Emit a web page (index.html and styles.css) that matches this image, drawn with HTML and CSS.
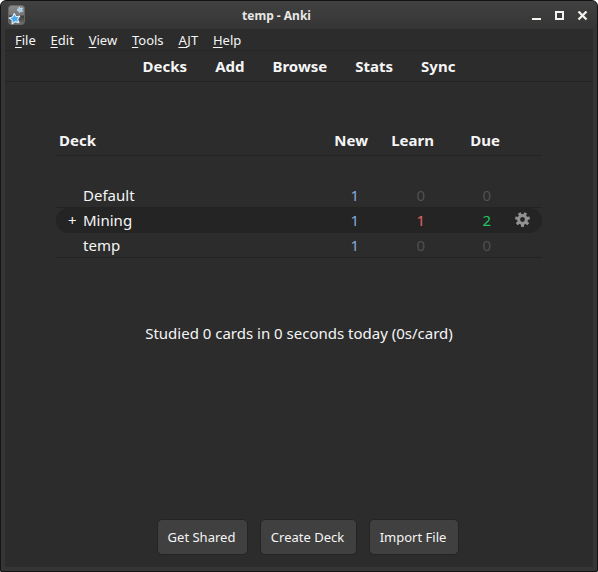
FILE: index.html
```html
<!DOCTYPE html>
<html lang="en">
<head>
<meta charset="utf-8">
<title>temp - Anki</title>
<link rel="stylesheet" href="styles.css">
</head>
<body>
<div class="window">
  <header class="titlebar">
    <svg class="app-icon" width="17" height="21" viewBox="0 0 17 21">
      <defs><linearGradient id="g" x1="0" y1="0" x2="0" y2="1"><stop offset="0" stop-color="#8b8b8b"/><stop offset=".5" stop-color="#777"/><stop offset=".55" stop-color="#3c3c3c"/><stop offset="1" stop-color="#747474"/></linearGradient></defs>
      <rect x=".5" y=".5" width="16" height="19" rx="3" fill="url(#g)" stroke="#666"/>
      <path d="M6.2 8.5l1.9 3 3.7-.4-2.2 3 1.3 3.5-3.7-1-3 2.2-.1-3.7-3-2.1 3.6-1.2z" fill="#48a8f0" stroke="#e0f0fa" stroke-width="1.1" stroke-linejoin="round"/>
      <path d="M11.3 2.2l1.2 1.3 1.9-.5-.8 1.7 1 1.6-1.9-.2-1.3 1.4-.5-1.8-1.8-.8 1.7-.9z" fill="#8bcaf5" stroke="#dceefa" stroke-width=".8" stroke-linejoin="round"/>
    </svg>
    <h1 class="title">temp - Anki</h1>
    <svg class="controls" width="56" height="10" viewBox="0 0 56 10" shape-rendering="crispEdges">
      <path d="M0 8h9M24 1h7v7h-7z" fill="none" stroke="#f4f4ef" stroke-width="2"/>
      <path d="M46.5.5l8 8M54.5.5l-8 8" fill="none" stroke="#f4f4ef" stroke-width="2.2" shape-rendering="auto"/>
    </svg>
  </header>
  <div class="client">
    <nav class="menubar">
      <span><u>F</u>ile</span><span><u>E</u>dit</span><span><u>V</u>iew</span><span><u>T</u>ools</span><span><u>A</u>JT</span><span><u>H</u>elp</span>
    </nav>
    <nav class="toolbar"><a>Decks</a><a>Add</a><a>Browse</a><a>Stats</a><a>Sync</a></nav>
    <main class="main">
      <section class="decks">
        <div class="row head"><span class="name">Deck</span><span>New</span><span>Learn</span><span>Due</span></div>
        <div class="row line"><span class="name">Default</span><span class="new">1</span><span class="zero">0</span><span class="zero">0</span></div>
        <div class="row current"><span class="name"><i class="expand">+</i>Mining</span><span class="new">1</span><span class="learn">1</span><span class="due">2</span>
          <svg class="gear" width="15" height="15" viewBox="-7.5 -7.5 15 15">
            <circle r="3.9" fill="none" stroke="#929292" stroke-width="3"/>
            <g fill="#929292"><path id="t" d="M-1.5 4.4h3V7.4h-3z"/><use href="#t" transform="rotate(51.43)"/><use href="#t" transform="rotate(102.86)"/><use href="#t" transform="rotate(154.29)"/><use href="#t" transform="rotate(205.71)"/><use href="#t" transform="rotate(257.14)"/><use href="#t" transform="rotate(308.57)"/></g>
          </svg>
        </div>
        <div class="row line"><span class="name">temp</span><span class="new">1</span><span class="zero">0</span><span class="zero">0</span></div>
      </section>
      <p class="studied">Studied 0 cards in 0 seconds today (0s/card)</p>
    </main>
    <footer class="actions"><button class="w1">Get Shared</button><button class="w2">Create Deck</button><button class="w3">Import File</button></footer>
  </div>
</div>
</body>
</html>
```
FILE: styles.css
```css
* { box-sizing: border-box; }
body { margin: 0; background: #fff; font-family: "Noto Sans", sans-serif; color: #f5f5f5; }
.window {
  width: 598px; height: 572px;
  display: flex; flex-direction: column;
  padding: 0 4px 4px;
  border: 1px solid #141414;
  border-radius: 6px 6px 1px 1px;
  background: linear-gradient(#414141, #353535 28px, #353535);
}
.titlebar { height: 28px; flex: none; display: flex; align-items: center; padding: 2px 5px 0 3px; }
.app-icon { width: 17px; margin-top: -1px; }
.title { flex: 1; margin: 0 4px 0 0; text-align: center; font-size: 12px; line-height: 16px; font-weight: 700; color: #e8e8e4; }
.client { flex: 1; display: flex; flex-direction: column; background: #2c2c2c; }
.menubar { height: 22px; flex: none; display: flex; gap: 14.8px; padding-left: 10px; border-bottom: 1px solid #262626; font-size: 13px; line-height: 23px; }
.menubar u { text-underline-offset: 2px; text-decoration-thickness: 1px; text-decoration-skip-ink: none; }
.toolbar { height: 31px; flex: none; display: flex; justify-content: center; gap: 28px; border-bottom: 1px solid #242424; font-size: 15px; font-weight: 700; line-height: 31px; }
.main { flex: 1; padding: 44px 51px 0 51px; font-size: 15px; }
.row { display: grid; grid-template-columns: 246px 66px 66px 66px 1fr; height: 25px; line-height: 25px; border-bottom: 1px solid transparent; }
.row > span { text-align: right; padding-right: 9px; }
.row > .name { text-align: left; padding: 0 0 0 27px; }
.row.head { height: 30px; line-height: 29px; margin-bottom: 27px; border-color: #232323; font-weight: 700; }
.row.head > span { padding-right: 0; }
.row.head > .name { padding-left: 3px; }
.row.line { border-color: #232323; }
.row.current { background: #242424; border-radius: 13px; border-color: #242424; }
.expand { display: inline-block; width: 15px; margin-left: -15px; font-style: normal; }
.new { color: #84a9dc; }
.learn { color: #e06464; }
.due { color: #22c55e; }
.zero { color: #505050; }
.gear { margin: 4px 0 0 15px; }
.studied { margin: 64px 0 0; text-align: center; line-height: 22px; }
.actions { height: 53px; flex: none; display: flex; justify-content: center; align-items: flex-start; gap: 12px; padding: 5px 0 0 17px; }
.actions button { height: 36px; padding: 0 1px 0 0; border: 1px solid #242424; border-radius: 5px; background: #404040; color: #f5f5f5; font: 13px "Noto Sans", sans-serif; }
.w1 { width: 91px; }
.w2 { width: 97px; }
.w3 { width: 90px; }
```
